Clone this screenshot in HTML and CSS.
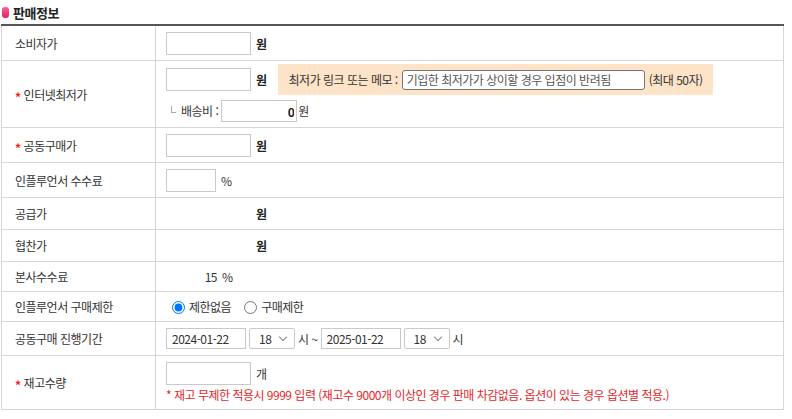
FILE: index.html
```html
<!DOCTYPE html>
<html lang="ko">
<head>
    <meta charset="UTF-8">
    <title>판매정보</title>
    <link rel="stylesheet" href="styles.css">
</head>
<body>
<div class="wrap">
    <h3 class="tit"><span class="pill"></span>판매정보</h3>
    <table class="tbl">
        <colgroup>
            <col class="col-th">
            <col>
        </colgroup>
        <tr class="r1">
            <th>소비자가</th>
            <td><div class="line"><input type="text" class="ipt w85"><b class="unit">원</b></div></td>
        </tr>
        <tr class="r2">
            <th><span class="req">*</span>인터넷최저가</th>
            <td>
                <div class="line">
                    <input type="text" class="ipt w85"><b class="unit">원</b>
                    <div class="memo">
                        최저가 링크 또는 메모 :
                        <input type="text" class="ipt-memo" placeholder="기입한 최저가가 상이할 경우 입점이 반려됨">
                        (최대 50자)
                    </div>
                </div>
                <div class="line sub">
                    <span class="corner"></span>
                    <span class="sub-lbl">배송비 :</span>
                    <input type="text" class="ipt ipt-ship" value="0"><span class="unit-n">원</span>
                </div>
            </td>
        </tr>
        <tr class="r3">
            <th><span class="req">*</span>공동구매가</th>
            <td><div class="line"><input type="text" class="ipt w85"><b class="unit">원</b></div></td>
        </tr>
        <tr class="r4">
            <th>인플루언서 수수료</th>
            <td><div class="line"><input type="text" class="ipt w50"><span>%</span></div></td>
        </tr>
        <tr class="r5">
            <th>공급가</th>
            <td><div class="line"><span class="blank w85"></span><b class="unit">원</b></div></td>
        </tr>
        <tr class="r5">
            <th>협찬가</th>
            <td><div class="line"><span class="blank w85"></span><b class="unit">원</b></div></td>
        </tr>
        <tr class="r7">
            <th>본사수수료</th>
            <td><div class="line"><span class="val">15</span><span>%</span></div></td>
        </tr>
        <tr class="r7">
            <th>인플루언서 구매제한</th>
            <td>
                <div class="line radios">
                    <label><input type="radio" name="limit" checked> 제한없음</label>
                    <label><input type="radio" name="limit"> 구매제한</label>
                </div>
            </td>
        </tr>
        <tr class="r9">
            <th>공동구매 진행기간</th>
            <td>
                <div class="line period">
                    <input type="text" class="ipt-date" value="2024-01-22">
                    <span class="sel"><select><option>18</option></select></span>
                    <span>시 ~</span>
                    <input type="text" class="ipt-date" value="2025-01-22">
                    <span class="sel"><select><option>18</option></select></span>
                    <span>시</span>
                </div>
            </td>
        </tr>
        <tr class="r10">
            <th><span class="req">*</span>재고수량</th>
            <td>
                <div class="line"><input type="text" class="ipt w85"><span>개</span></div>
                <p class="note">* 재고 무제한 적용시 9999 입력 (재고수 9000개 이상인 경우 판매 차감없음. 옵션이 있는 경우 옵션별 적용.)</p>
            </td>
        </tr>
    </table>
</div>
</body>
</html>
```

FILE: styles.css
```css
* {
    margin: 0;
    padding: 0;
    box-sizing: border-box;
}
body {
    font-family: "Noto Sans CJK KR", "Liberation Sans", sans-serif;
    font-size: 12px;
    letter-spacing: -0.5px;
    color: #333;
    background: #fff;
}
input, select {
    font-family: inherit;
    letter-spacing: inherit;
    font-size: 12px;
    color: #333;
}
.wrap {
    width: 783px;
    margin-left: 1px;
}
.tit {
    display: flex;
    align-items: center;
    gap: 4px;
    height: 24px;
    padding-left: 1px;
    font-size: 13px;
    font-weight: bold;
    color: #222;
}
.pill {
    width: 7px;
    height: 11px;
    border-radius: 3px;
    background: linear-gradient(#ff5c95, #e0245e);
}
.tbl {
    width: 100%;
    border-collapse: collapse;
    border-top: 2px solid #555;
    border-left: 1px solid #d6d6d6;
    border-right: 1px solid #d6d6d6;
}
.col-th {
    width: 154px;
}
.tbl th {
    padding: 0 0 0 13px;
    text-align: left;
    font-weight: normal;
    border-right: 1px solid #d6d6d6;
    border-bottom: 1px solid #d6d6d6;
}
.tbl td {
    padding: 6px 10px 5px;
    border-bottom: 1px solid #d6d6d6;
}
.req {
    display: inline-block;
    color: #e22;
    font-weight: bold;
    margin-right: 3px;
    transform: translateY(2px);
}
.line {
    display: flex;
    align-items: center;
    gap: 5px;
    line-height: 20px;
}
.ipt {
    height: 23px;
    border: 1px solid #c9c9c9;
    padding: 0 4px;
    outline: none;
}
.w85 { width: 85px; }
.w50 { width: 50px; }
.blank {
    display: inline-block;
    height: 20px;
}
.unit {
    color: #222;
}
.r2 td {
    padding: 3px 10px 5px;
}
.memo {
    display: flex;
    align-items: center;
    gap: 4px;
    height: 31px;
    margin-left: 6px;
    padding: 0 10px 0 11px;
    background: #fde4c8;
}
.ipt-memo {
    width: 243px;
    height: 20px;
    padding: 0 4px;
    border: 1px solid #767676;
    border-radius: 3px;
    outline: none;
}
.ipt-memo::placeholder {
    color: #555;
}
.sub {
    margin-top: 5px;
    gap: 0;
    padding-left: 5px;
}
.corner {
    width: 5px;
    height: 7px;
    margin: -4px 5px 0 0;
    border-left: 1px solid #aaa;
    border-bottom: 1px solid #aaa;
}
.sub-lbl {
    margin-right: 3px;
}
.ipt-ship {
    width: 76px;
    height: 22px;
    text-align: right;
    padding-right: 2px;
    margin-right: 1px;
    font-weight: bold;
    color: #222;
}
.val {
    width: 51px;
    text-align: right;
}
.r7 .line {
    line-height: 18px;
}
.radios label {
    display: flex;
    align-items: center;
    margin-right: 2px;
}
.radios input {
    margin: 0 4px 0 6px;
    width: 13px;
    height: 13px;
}
.period {
    gap: 3px;
}
.ipt-date {
    width: 80px;
    height: 21px;
    padding: 0 5px;
    border: 1px solid #c9c9c9;
    outline: none;
}
.sel {
    position: relative;
    display: inline-block;
}
.sel select {
    appearance: none;
    width: 46px;
    height: 21px;
    padding: 0 0 0 9px;
    border: 1px solid #c9c9c9;
    border-radius: 2px;
    background: #fff;
}
.sel::after {
    content: "";
    position: absolute;
    right: 9px;
    top: 6px;
    width: 5px;
    height: 5px;
    border-right: 1px solid #888;
    border-bottom: 1px solid #888;
    transform: rotate(45deg);
}
.r9 td {
    padding: 6px 10px 6px;
}
.note {
    margin-top: 1px;
    line-height: 18px;
    color: #e3262b;
}
```
